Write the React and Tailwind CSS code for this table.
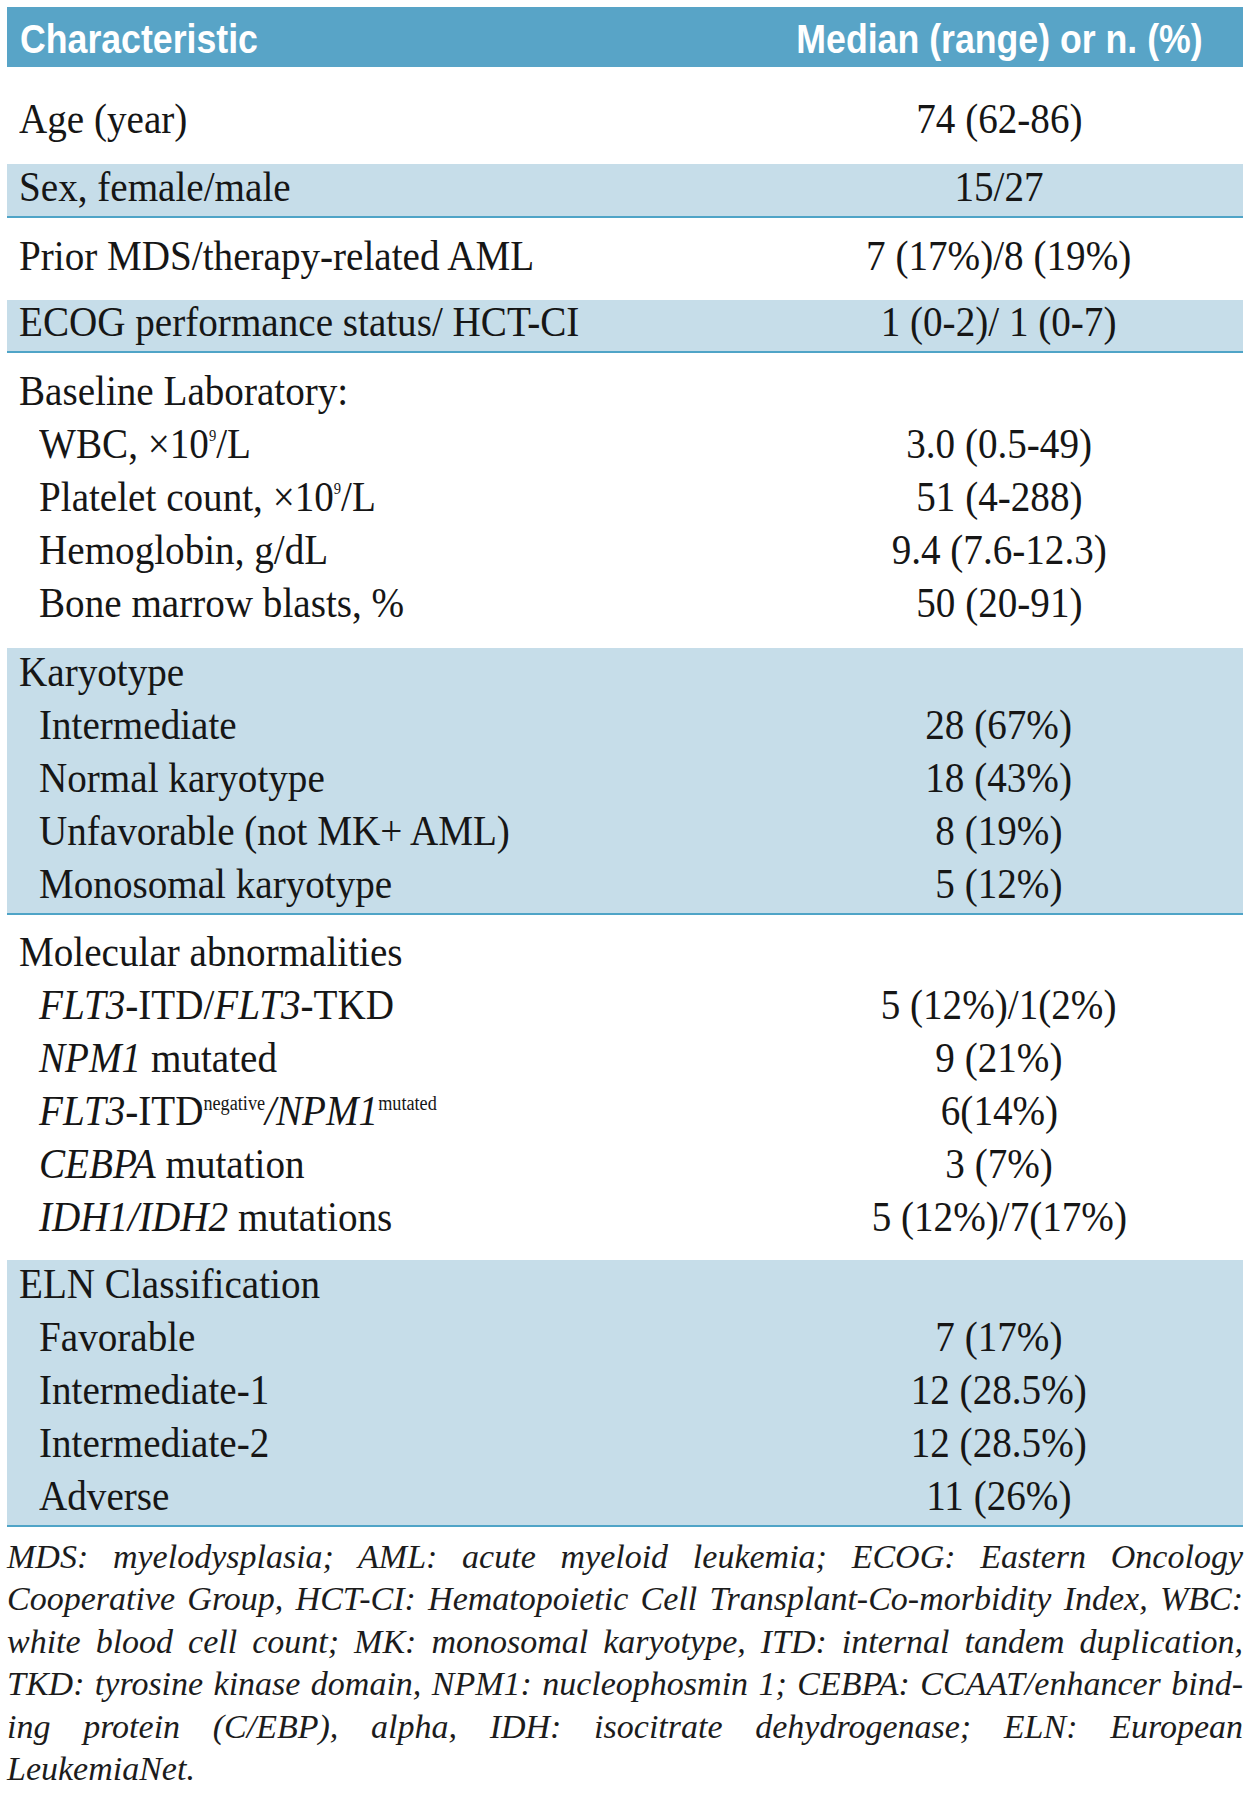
import React from "react";

const serif = { fontFamily: '"Liberation Serif", "Times New Roman", serif' };

function Line({ label, value, sub }) {
  return (
    <div className="grid grid-cols-[748px_488px] leading-[53px] h-[53px]">
      <div className={(sub ? "pl-[32px]" : "pl-[12px]") + " whitespace-nowrap"}>
        <span className="inline-block origin-left scale-x-[0.91]">{label}</span>
      </div>
      <div className="text-center whitespace-nowrap">
        <span className="inline-block origin-center scale-x-[0.91]">{value}</span>
      </div>
    </div>
  );
}

function I({ children }) {
  return <span className="italic">{children}</span>;
}

function Sup({ children, small }) {
  return (
    <sup className={small ? "text-[16px] -top-[17px]" : "text-[20px] -top-[15px]"}>{children}</sup>
  );
}

const band = "bg-[#c6dde9] border-b-2 border-[#4fa4c7]";

export default function App() {
  return (
    <div className="min-h-[1800px] bg-white pt-[7px] px-[7px] text-[#161616]" style={serif}>
      <div className="w-[1236px] text-[43px]">
        {/* Header */}
        <div className="grid grid-cols-[748px_488px] h-[60px] items-center bg-[#58a4c7] text-white">
          <div className="pl-[13px]">
            <span
              className="inline-block origin-left scale-x-[0.87] font-bold text-[41px] leading-none"
              style={{ fontFamily: '"Liberation Sans", Arial, sans-serif' }}
            >
              Characteristic
            </span>
          </div>
          <div className="text-center">
            <span
              className="inline-block origin-center scale-x-[0.87] font-bold text-[41px] leading-none whitespace-nowrap"
              style={{ fontFamily: '"Liberation Sans", Arial, sans-serif' }}
            >
              Median (range) or n. (%)
            </span>
          </div>
        </div>

        {/* Age */}
        <div className="pt-[25px] pb-[19px]">
          <Line label="Age (year)" value="74 (62-86)" />
        </div>

        {/* Sex */}
        <div className={band}>
          <div className="grid grid-cols-[748px_488px] leading-[45px] h-[52px]">
            <div className="pl-[12px] whitespace-nowrap">
              <span className="inline-block origin-left scale-x-[0.91]">Sex, female/male</span>
            </div>
            <div className="text-center">
              <span className="inline-block origin-center scale-x-[0.91]">15/27</span>
            </div>
          </div>
        </div>

        {/* Prior */}
        <div className="pt-[11px] pb-[18px]">
          <Line label="Prior MDS/therapy-related AML" value="7 (17%)/8 (19%)" />
        </div>

        {/* ECOG */}
        <div className={band}>
          <div className="grid grid-cols-[748px_488px] leading-[44px] h-[51px]">
            <div className="pl-[12px] whitespace-nowrap">
              <span className="inline-block origin-left scale-x-[0.91]">ECOG performance status/ HCT-CI</span>
            </div>
            <div className="text-center">
              <span className="inline-block origin-center scale-x-[0.91]">1 (0-2)/ 1 (0-7)</span>
            </div>
          </div>
        </div>

        {/* Baseline */}
        <div className="pt-[11px] pb-[19px]">
          <Line label="Baseline Laboratory:" value="" />
          <Line
            sub
            label={
              <>
                WBC, ×10<Sup small>9</Sup>/L
              </>
            }
            value="3.0 (0.5-49)"
          />
          <Line
            sub
            label={
              <>
                Platelet count, ×10<Sup small>9</Sup>/L
              </>
            }
            value="51 (4-288)"
          />
          <Line sub label="Hemoglobin, g/dL" value="9.4 (7.6-12.3)" />
          <Line sub label="Bone marrow blasts, %" value="50 (20-91)" />
        </div>

        {/* Karyotype */}
        <div className={band + " flex flex-col pb-[3px]"}>
          <div className="-mt-[3px]">
            <Line label="Karyotype" value="" />
            <Line sub label="Intermediate" value="28 (67%)" />
            <Line sub label="Normal karyotype" value="18 (43%)" />
            <Line sub label="Unfavorable (not MK+ AML)" value="8 (19%)" />
            <Line sub label="Monosomal karyotype" value="5 (12%)" />
          </div>
        </div>

        {/* Molecular */}
        <div className="pt-[10px] pb-[17px]">
          <Line label="Molecular abnormalities" value="" />
          <Line
            sub
            label={
              <>
                <I>FLT3</I>-ITD/<I>FLT3</I>-TKD
              </>
            }
            value="5 (12%)/1(2%)"
          />
          <Line
            sub
            label={
              <>
                <I>NPM1</I> mutated
              </>
            }
            value="9 (21%)"
          />
          <Line
            sub
            label={
              <>
                <I>FLT3</I>-ITD<Sup>negative</Sup>
                <I>/NPM1</I>
                <Sup>mutated</Sup>
              </>
            }
            value="6(14%)"
          />
          <Line
            sub
            label={
              <>
                <I>CEBPA</I> mutation
              </>
            }
            value="3 (7%)"
          />
          <Line
            sub
            label={
              <>
                <I>IDH1/IDH2</I> mutations
              </>
            }
            value="5 (12%)/7(17%)"
          />
        </div>

        {/* ELN */}
        <div className={band + " flex flex-col pb-[3px]"}>
          <div className="-mt-[3px]">
            <Line label="ELN Classification" value="" />
            <Line sub label="Favorable" value="7 (17%)" />
            <Line sub label="Intermediate-1" value="12 (28.5%)" />
            <Line sub label="Intermediate-2" value="12 (28.5%)" />
            <Line sub label="Adverse" value="11 (26%)" />
          </div>
        </div>
      </div>

      {/* Footnote */}
      <div className="w-[1236px] mt-[9px] italic text-[34px] leading-[42.4px] text-[#1c1c1c]">
        <div className="text-justify [text-align-last:justify] whitespace-nowrap">
          MDS: myelodysplasia; AML: acute myeloid leukemia; ECOG: Eastern Oncology
        </div>
        <div className="text-justify [text-align-last:justify] whitespace-nowrap">
          Cooperative Group, HCT-CI: Hematopoietic Cell Transplant-Co-morbidity Index, WBC:
        </div>
        <div className="text-justify [text-align-last:justify] whitespace-nowrap">
          white blood cell count; MK: monosomal karyotype, ITD: internal tandem duplication,
        </div>
        <div className="text-justify [text-align-last:justify] whitespace-nowrap">
          TKD: tyrosine kinase domain, NPM1: nucleophosmin 1; CEBPA: CCAAT/enhancer bind-
        </div>
        <div className="text-justify [text-align-last:justify] whitespace-nowrap">
          ing protein (C/EBP), alpha, IDH: isocitrate dehydrogenase; ELN: European
        </div>
        <div className="whitespace-nowrap">LeukemiaNet.</div>
      </div>
    </div>
  );
}
